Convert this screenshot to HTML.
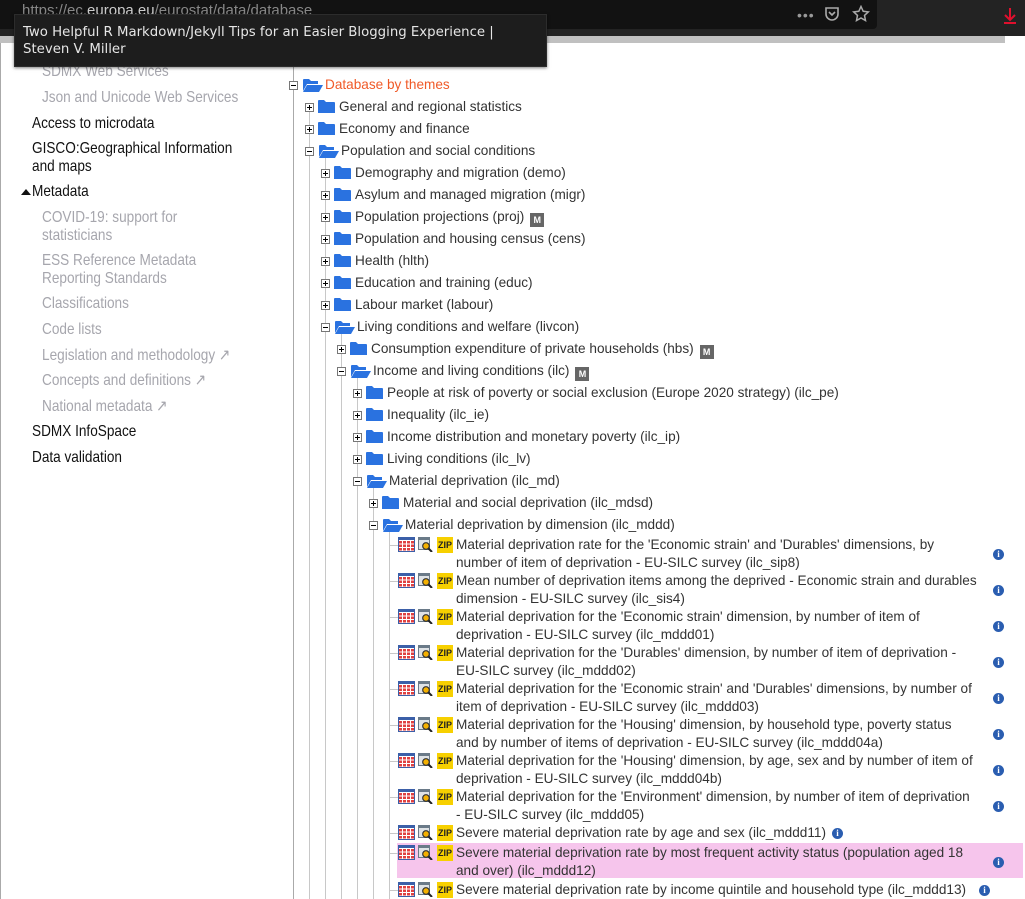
<!DOCTYPE html>
<html><head><meta charset="utf-8"><style>
*{margin:0;padding:0;box-sizing:border-box}
body{width:1025px;height:899px;overflow:hidden;background:#fff;position:relative;font-family:"Liberation Sans",sans-serif}
.a{position:absolute;white-space:nowrap}
.sb{font-size:16px;transform:scaleX(.85);transform-origin:left center;line-height:18px;color:#111}
.sb.g{color:#a6a6ad}
.t{font-size:13.6px;color:#333;line-height:18px}
.tg{position:absolute;width:9px;height:9px;border:1px solid #777;background:#fff}
.tg:before{content:"";position:absolute;left:1px;top:3px;width:5px;height:1px;background:#000}
.tg.p:after{content:"";position:absolute;left:3px;top:1px;width:1px;height:5px;background:#000}
.vl{position:absolute;width:1px;background:#c8c8c8}
.hl{position:absolute;height:1px;background:#c8c8c8}
.m{display:inline-block;width:14px;height:14px;background:#666;color:#fff;font-size:9px;font-weight:bold;text-align:center;line-height:14px;vertical-align:-2px;margin-left:6px}
.inf{position:absolute;width:11px;height:11px;border-radius:50%;background:#2a5db0;color:#fff;font:bold 9px/11px "Liberation Serif",serif;text-align:center}
</style></head><body>

<div class="a" style="left:0;top:0;width:1025px;height:36px;background:#232323"></div>
<div class="a" style="left:0;top:0;width:877px;height:29px;background:#121212;border-radius:0 0 4px 0"></div>
<div class="a" style="left:22px;top:2px;font-size:15px;color:#888">https://ec.<span style="color:#ccc">europa.eu</span>/eurostat/data/database</div>
<div class="a" style="left:797px;top:7px;font-size:14px;color:#999;letter-spacing:1px">•••</div>
<svg class="a" style="left:824px;top:6px" width="16" height="16"><path d="M2 2h12v6a6 6 0 0 1-12 0z" fill="none" stroke="#aaa" stroke-width="1.6"/><path d="M5 6l3 3 3-3" fill="none" stroke="#aaa" stroke-width="1.6"/></svg>
<svg class="a" style="left:852px;top:5px" width="18" height="18"><path d="M9 1.5l2.2 4.8 5.1.6-3.8 3.5 1 5.1L9 13l-4.5 2.5 1-5.1-3.8-3.5 5.1-.6z" fill="none" stroke="#aaa" stroke-width="1.5"/></svg>
<svg class="a" style="left:1002px;top:7px" width="16" height="18"><path d="M8 1v12M3 8l5 5 5-5M2 16h12" fill="none" stroke="#e0102e" stroke-width="2"/></svg>
<div class="a" style="left:0;top:36px;width:1005px;height:7px;background:#c0c0c0"></div>

<div class="a" style="left:0;top:43px;width:1px;height:856px;background:#aaa"></div>
<div class="a" style="left:293px;top:43px;width:1px;height:856px;background:#aaa"></div>
<div class="a sb g" style="left:42px;top:63px">SDMX Web Services</div>
<div class="a sb g" style="left:42px;top:89px">Json and Unicode Web Services</div>
<div class="a sb" style="left:32px;top:115px">Access to microdata</div>
<div class="a sb" style="left:32px;top:140px">GISCO:Geographical Information<br>and maps</div>
<div class="a" style="left:21px;top:189px;width:0;height:0;border-left:5px solid transparent;border-right:5px solid transparent;border-bottom:6px solid #111"></div>
<div class="a sb" style="left:32px;top:183px">Metadata</div>
<div class="a sb g" style="left:42px;top:209px">COVID-19: support for<br>statisticians</div>
<div class="a sb g" style="left:42px;top:252px">ESS Reference Metadata<br>Reporting Standards</div>
<div class="a sb g" style="left:42px;top:295px">Classifications</div>
<div class="a sb g" style="left:42px;top:321px">Code lists</div>
<div class="a sb g" style="left:42px;top:347px">Legislation and methodology ↗</div>
<div class="a sb g" style="left:42px;top:372px">Concepts and definitions ↗</div>
<div class="a sb g" style="left:42px;top:398px">National metadata ↗</div>
<div class="a sb" style="left:32px;top:423px">SDMX InfoSpace</div>
<div class="a sb" style="left:32px;top:449px">Data validation</div>

<div class="vl" style="left:309px;top:112px;height:787px"></div>
<div class="vl" style="left:325px;top:156px;height:743px"></div>
<div class="vl" style="left:341px;top:332px;height:567px"></div>
<div class="vl" style="left:357px;top:376px;height:523px"></div>
<div class="vl" style="left:373px;top:486px;height:413px"></div>
<div class="vl" style="left:389px;top:530px;height:369px"></div>
<div class="a" style="left:287px;top:56px;width:14px;height:11px;background:#2a72e0"></div>
<div class="a" style="left:300px;top:55px;width:30px;height:12px;background:#1d1d1d"></div>

<div id="tree"></div>
<div class="a" style="left:397px;top:843px;width:626px;height:35px;background:#f6c5ec"></div>

<script>
var h='';
function fo(x,y,open){
 if(open) return '<svg class="a" style="left:'+x+'px;top:'+(y-8)+'px" width="22" height="16"><path d="M1 3q0-1 1-1h5l2 2h7v3H5L1 14z" fill="#2a72e0"/><path d="M5 8h16l-4 7H1z" fill="#2a72e0"/></svg>';
 return '<svg class="a" style="left:'+x+'px;top:'+(y-8)+'px" width="17" height="15"><path d="M0 2q0-1 1-1h5l2 2h8q1 0 1 1v10H0z" fill="#2a72e0"/></svg>';
}
function row(y,tx,open,txt,m,col){
 y+=1;
 h+='<div class="tg '+(open?'':'p')+'" style="left:'+(tx-4)+'px;top:'+(y-4)+'px"></div>';
 h+=fo(tx+9,y,open);
 h+='<div class="a t" style="left:'+(tx+(open?32:30))+'px;top:'+(y-9)+'px;'+(col?'color:'+col:'')+'">'+txt+(m?'<span class="m">M</span>':'')+'</div>';
}
row(84,293,1,'Database by themes',0,'#f05a28');
row(106,309,0,'General and regional statistics');
row(128,309,0,'Economy and finance');
row(150,309,1,'Population and social conditions');
row(172,325,0,'Demography and migration (demo)');
row(194,325,0,'Asylum and managed migration (migr)');
row(216,325,0,'Population projections (proj)',1);
row(238,325,0,'Population and housing census (cens)');
row(260,325,0,'Health (hlth)');
row(282,325,0,'Education and training (educ)');
row(304,325,0,'Labour market (labour)');
row(326,325,1,'Living conditions and welfare (livcon)');
row(348,341,0,'Consumption expenditure of private households (hbs)',1);
row(370,341,1,'Income and living conditions (ilc)',1);
row(392,357,0,'People at risk of poverty or social exclusion (Europe 2020 strategy) (ilc_pe)');
row(414,357,0,'Inequality (ilc_ie)');
row(436,357,0,'Income distribution and monetary poverty (ilc_ip)');
row(458,357,0,'Living conditions (ilc_lv)');
row(480,357,1,'Material deprivation (ilc_md)');
row(502,373,0,'Material and social deprivation (ilc_mdsd)');
row(524,373,1,'Material deprivation by dimension (ilc_mddd)');
function ic(y){
 var s='<div class="hl" style="left:389px;top:'+y+'px;width:9px"></div>';
 s+='<svg class="a" style="left:398px;top:'+(y-8)+'px" width="17" height="15"><rect x="0" y="0" width="17" height="15" fill="#3b5fa8"/><rect x="1" y="3" width="15" height="11" fill="#fff"/>';
 for(var r=0;r<3;r++)for(var c=0;c<4;c++)s+='<rect x="'+(1+c*4)+'" y="'+(4+r*3.5)+'" width="3" height="2.5" fill="#e04040"/>';
 s+='</svg>';
 s+='<svg class="a" style="left:418px;top:'+(y-8)+'px" width="15" height="15"><rect x="0" y="0" width="12" height="13" fill="#6a7a88"/><rect x="1" y="3" width="10" height="9" fill="#dfe3e6"/><circle cx="8" cy="9" r="3.3" fill="#f4b000" stroke="#333" stroke-width="1.2"/><path d="M10.5 11.5l3.5 3.5" stroke="#222" stroke-width="2"/></svg>';
 s+='<div class="a" style="left:437px;top:'+(y-8)+'px;width:16px;height:16px;background:#f7d000;font:bold 9px/16px \'Liberation Sans\',sans-serif;color:#222;text-align:center">ZIP</div>';
 return s;
}
var L=[
[544,"Material deprivation rate for the 'Economic strain' and 'Durables' dimensions, by<br>number of item of deprivation - EU-SILC survey (ilc_sip8)",0],
[580,"Mean number of deprivation items among the deprived - Economic strain and durables<br>dimension - EU-SILC survey (ilc_sis4)",0],
[616,"Material deprivation for the 'Economic strain' dimension, by number of item of<br>deprivation - EU-SILC survey (ilc_mddd01)",0],
[652,"Material deprivation for the 'Durables' dimension, by number of item of deprivation -<br>EU-SILC survey (ilc_mddd02)",0],
[688,"Material deprivation for the 'Economic strain' and 'Durables' dimensions, by number of<br>item of deprivation - EU-SILC survey (ilc_mddd03)",0],
[724,"Material deprivation for the 'Housing' dimension, by household type, poverty status<br>and by number of items of deprivation - EU-SILC survey (ilc_mddd04a)",0],
[760,"Material deprivation for the 'Housing' dimension, by age, sex and by number of item of<br>deprivation - EU-SILC survey (ilc_mddd04b)",0],
[796,"Material deprivation for the 'Environment' dimension, by number of item of deprivation<br>- EU-SILC survey (ilc_mddd05)",0],
[832,"Severe material deprivation rate by age and sex (ilc_mddd11)",832],
[852,"Severe material deprivation rate by most frequent activity status (population aged 18<br>and over) (ilc_mddd12)",0],
[889,"Severe material deprivation rate by income quintile and household type (ilc_mddd13)",979]
];
var ov='';
L.forEach(function(e){
 var y=e[0]+1;
 ov+=ic(y);
 ov+='<div class="a t" style="left:456px;top:'+(y-9)+'px;line-height:18px">'+e[1]+'</div>';
 var ix=e[2]||993, iy=e[2]?y:y+9;
 ov+='<div class="inf" style="left:'+ix+'px;top:'+(iy-5)+'px">i</div>';
});
document.getElementById('tree').innerHTML=h;
document.body.insertAdjacentHTML('beforeend',ov);
</script>

<div class="a" style="left:14px;top:14px;width:533px;height:53px;background:#1d1d1d;border:1px solid #2c2c2c;box-shadow:0 1px 3px rgba(0,0,0,.5)"></div>
<div class="a" style="left:23px;top:24px;font-family:'DejaVu Sans',sans-serif;font-size:13.3px;line-height:17px;color:#e6e6e6">Two Helpful R Markdown/Jekyll Tips for an Easier Blogging Experience |<br>Steven V. Miller</div>
</body></html>
